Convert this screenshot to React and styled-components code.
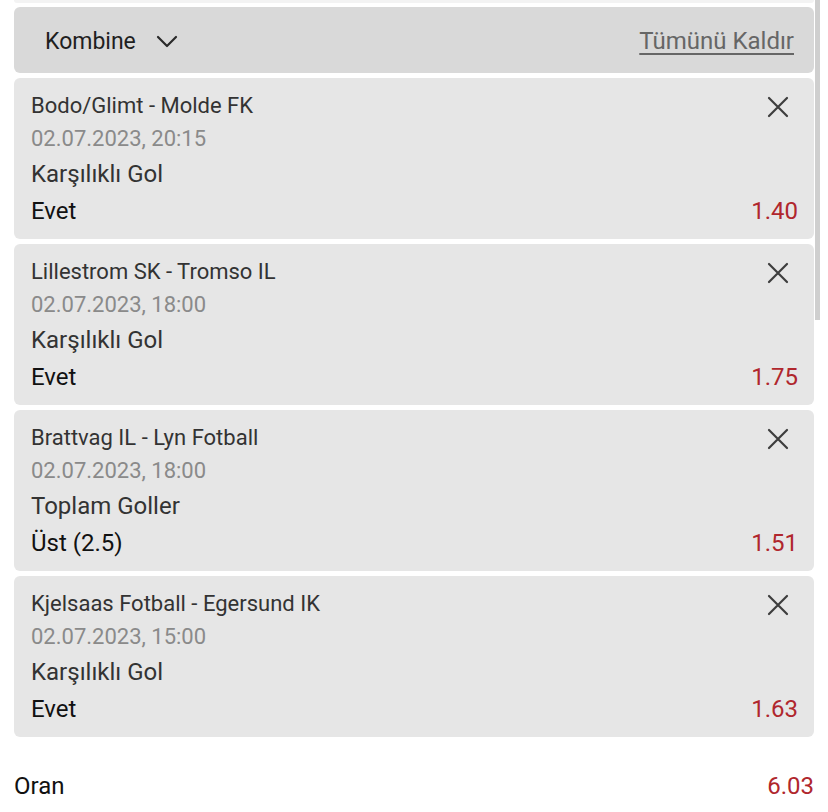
import React from "react";
import styled, { createGlobalStyle } from "styled-components";

const bets = [
  {
    match: "Bodo/Glimt - Molde FK",
    date: "02.07.2023, 20:15",
    market: "Karşılıklı Gol",
    pick: "Evet",
    odd: "1.40",
  },
  {
    match: "Lillestrom SK - Tromso IL",
    date: "02.07.2023, 18:00",
    market: "Karşılıklı Gol",
    pick: "Evet",
    odd: "1.75",
  },
  {
    match: "Brattvag IL - Lyn Fotball",
    date: "02.07.2023, 18:00",
    market: "Toplam Goller",
    pick: "Üst (2.5)",
    odd: "1.51",
  },
  {
    match: "Kjelsaas Fotball - Egersund IK",
    date: "02.07.2023, 15:00",
    market: "Karşılıklı Gol",
    pick: "Evet",
    odd: "1.63",
  },
];

const Global = createGlobalStyle`
  body {
    margin: 0;
    background: #ffffff;
    font-family: Roboto, "Liberation Sans", sans-serif;
  }
`;

const CloseIcon = () => (
  <svg width="22" height="22" viewBox="0 0 22 22">
    <path
      d="M2 2 L20 20 M20 2 L2 20"
      stroke="#3d3d3d"
      strokeWidth="2.2"
      strokeLinecap="round"
    />
  </svg>
);

const Chevron = () => (
  <svg width="22" height="13" viewBox="0 0 22 13">
    <path
      d="M2 2 L11 11 L20 2"
      fill="none"
      stroke="#2a2a2a"
      strokeWidth="2.2"
      strokeLinecap="round"
      strokeLinejoin="round"
    />
  </svg>
);

const BetCard = ({ bet }) => (
  <Card>
    <TopRow>
      <Match>{bet.match}</Match>
      <CloseBtn>
        <CloseIcon />
      </CloseBtn>
    </TopRow>
    <DateText>{bet.date}</DateText>
    <Market>{bet.market}</Market>
    <PickRow>
      <Pick>{bet.pick}</Pick>
      <Odd>{bet.odd}</Odd>
    </PickRow>
  </Card>
);

const App = () => {
  return (
    <Page>
      <Global />
      <Scroll />
      <TopEdge />
      <Header>
        <Kind>
          Kombine
          <Chevron />
        </Kind>
        <ClearAll>Tümünü Kaldır</ClearAll>
      </Header>
      <List>
        {bets.map((bet, i) => (
          <BetCard key={`${bet.match}${i}`} bet={bet} />
        ))}
      </List>
      <Total>
        <span>Oran</span>
        <Odd>6.03</Odd>
      </Total>
    </Page>
  );
};

export default App;

const Page = styled.div`
  position: relative;
  width: 828px;
  height: 812px;
  box-sizing: border-box;
  padding: 0 14px 0 14px;
  overflow: hidden;
`;

const Scroll = styled.div`
  position: absolute;
  top: 0;
  left: 815px;
  width: 5px;
  height: 320px;
  background: #cfcfcf;
`;

const TopEdge = styled.div`
  height: 3px;
  margin-bottom: 4px;
  background: #f3f3f3;
  border-radius: 0 0 6px 6px;
`;

const Header = styled.div`
  display: flex;
  align-items: center;
  justify-content: space-between;
  height: 66px;
  padding: 2px 20px 0 31px;
  box-sizing: border-box;
  background: #d9d9d9;
  border-radius: 6px;
`;

const Kind = styled.div`
  display: flex;
  align-items: center;
  gap: 20px;
  font-size: 23px;
  color: #1f1f1f;
`;

const ClearAll = styled.span`
  font-size: 24px;
  color: #666666;
  text-decoration: underline;
  text-decoration-thickness: 1.5px;
  text-underline-offset: 4px;
`;

const List = styled.div`
  display: flex;
  flex-direction: column;
  gap: 5px;
  margin-top: 5px;
`;

const Card = styled.div`
  display: flex;
  flex-direction: column;
  height: 161px;
  box-sizing: border-box;
  padding: 10px 16px 9px 17px;
  background: #e6e6e6;
  border-radius: 6px;
`;

const TopRow = styled.div`
  display: flex;
  align-items: center;
  justify-content: space-between;
  height: 34px;
`;

const Match = styled.span`
  font-size: 22px;
  color: #333333;
`;

const CloseBtn = styled.span`
  display: flex;
  margin: 4px 9px 0 0;
`;

const DateText = styled.div`
  height: 34px;
  line-height: 34px;
  font-size: 22px;
  color: #8a8a8a;
`;

const Market = styled.div`
  height: 36px;
  line-height: 36px;
  font-size: 24px;
  color: #333333;
`;

const PickRow = styled.div`
  display: flex;
  justify-content: space-between;
  align-items: center;
  height: 38px;
`;

const Pick = styled.span`
  font-size: 24px;
  color: #111111;
`;

const Odd = styled.span`
  font-size: 24px;
  color: #b0272d;
`;

const Total = styled.div`
  display: flex;
  justify-content: space-between;
  align-items: center;
  margin-top: 34px;
  height: 30px;
  font-size: 24px;
  color: #111111;
`;
